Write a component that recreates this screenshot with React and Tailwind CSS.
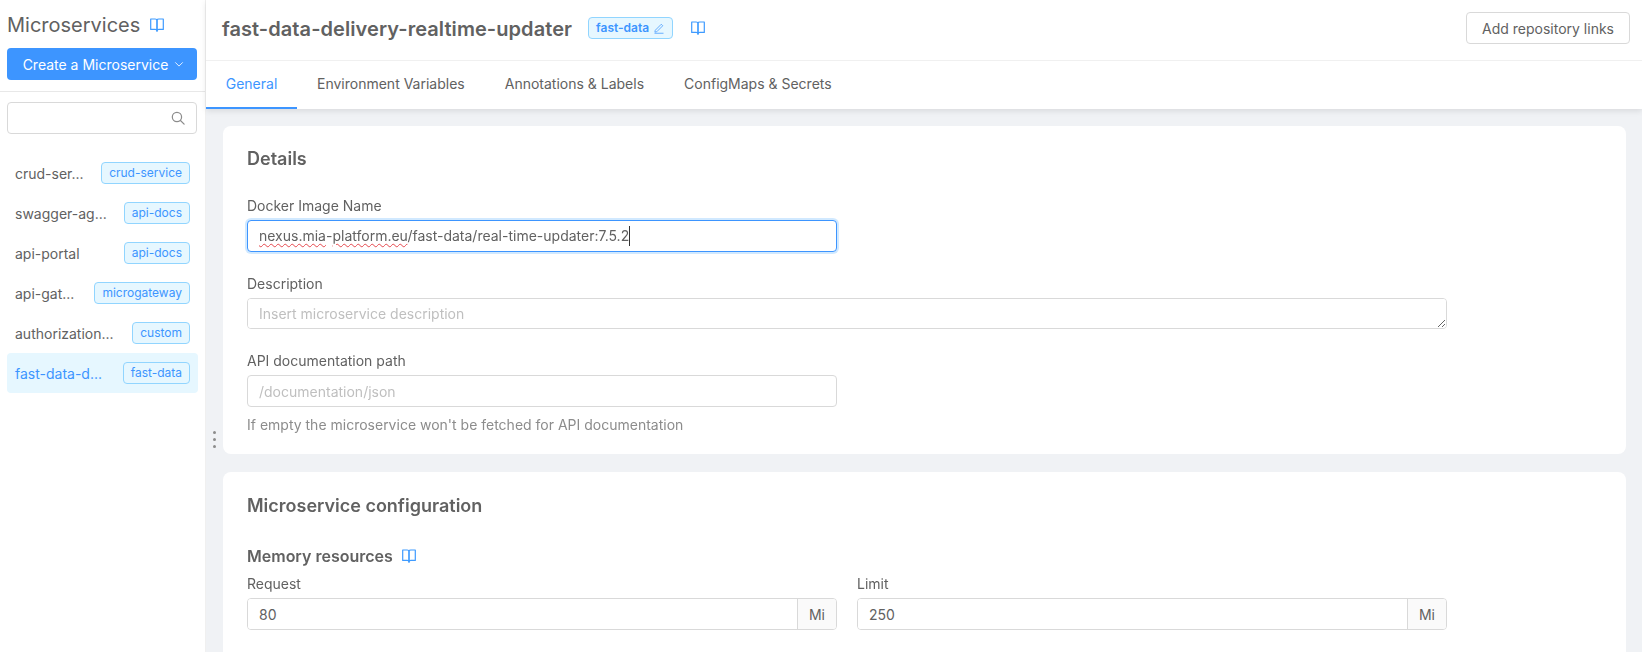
import React from "react";

const Book = ({ className = "" }) => (
  <svg viewBox="0 0 14 14" className={className} fill="none" stroke="#3f9bff" strokeWidth="1.2" strokeLinejoin="round" strokeLinecap="round">
    <path d="M.7 1h4.400c1.100 0 1.900.5 1.900 1.400v9.900c0-.5-.8-.9-1.900-.9H.7z" />
    <path d="M13.300 1H8.900C7.800 1 7 1.500 7 2.400v9.900c0-.5.8-.9 1.900-.9h4.400z" />
    <path d="M7 12.300v1.200" />
  </svg>
);

const items = [
  ["crud-ser...", "crud-service"],
  ["swagger-ag...", "api-docs"],
  ["api-portal", "api-docs"],
  ["api-gat...", "microgateway"],
  ["authorization...", "custom"],
  ["fast-data-d...", "fast-data"],
];

const Tag = ({ children }) => (
  <span className="shrink-0 h-[22px] flex items-center px-[7px] rounded-[4px] border border-[#91d5ff] bg-[#e6f7ff] text-[12px] text-[#3d95ff]">{children}</span>
);

const Unit = ({ label, value }) => (
  <div className="flex-1">
    <div className="h-[22px] mb-[4px] flex items-center text-[14px]">{label}</div>
    <div className="flex h-[32px] border border-[#d9d9d9] rounded-[4px] overflow-hidden">
      <div className="flex-1 px-[11px] flex items-center text-[14px] bg-white">{value}</div>
      <div className="w-[39px] flex items-center justify-center border-l border-[#d9d9d9] bg-[#fafafa] text-[14px]">Mi</div>
    </div>
  </div>
);

const Misspelled = ({ children }) => (
  <span className="underline decoration-wavy decoration-[#e5484d] decoration-1 underline-offset-2">{children}</span>
);

export default function App() {
  return (
    <div className="relative flex h-screen w-full overflow-hidden bg-[#f0f2f5] text-[#616161] font-['Inter',sans-serif]">
      <aside className="w-[206px] shrink-0 bg-white border-r border-[#f0f0f0] flex flex-col">
        <div className="h-[48px] px-[7px] flex items-center gap-[10px] pt-[1px]">
          <span className="text-[20px]">Microservices</span>
          <Book className="w-[14px] h-[14px]" />
        </div>
        <div className="pl-[7px] pr-[8px]">
          <button className="w-full h-[32px] rounded-[4px] bg-[#3d95ff] text-white text-[14px] flex items-center justify-center gap-[6px] pl-[3px]">
            Create a Microservice
            <svg viewBox="0 0 12 12" className="w-[10px] h-[10px]" fill="none" stroke="white" strokeWidth="1"><path d="M1.500 4l4.500 4.500L10.500 4" /></svg>
          </button>
        </div>
        <div className="mt-[11px] border-t border-[#e8e8e8]" />
        <div className="pl-[7px] pr-[8px] mt-[10px]">
          <div className="h-[32px] border border-[#d9d9d9] rounded-[4px] bg-white flex items-center justify-end pr-[11px]">
            <svg viewBox="0 0 16 16" className="w-[14px] h-[14px]" fill="none" stroke="#8c8c8c" strokeWidth="1.400" strokeLinecap="round"><circle cx="6.800" cy="6.800" r="5.300" /><path d="M10.800 10.800l4.200 4.200" /></svg>
          </div>
        </div>
        <ul className="mt-[19px] px-[7px]">
          {items.map(([name, tag], i) => (
            <li key={tag + i} className={`h-[40px] flex items-center justify-between pl-[8px] pr-[8px] rounded-[4px] text-[14px] ${i === 5 ? "bg-[#e6f7ff] text-[#3d95ff]" : ""}`}>
              <span className="whitespace-nowrap">{name}</span>
              <Tag>{tag}</Tag>
            </li>
          ))}
        </ul>
      </aside>

      <main className="flex-1 min-w-0 flex flex-col">
        <div className="bg-white shadow-[0_2px_6px_rgba(0,0,0,0.1)] z-10 relative">
          <div className="h-[61px] flex items-center pl-[16px] pr-[12px] pb-[4px] border-b border-[#f0f0f0]">
            <h1 className="mt-[2px] text-[20px] font-semibold tracking-[0.07px]">fast-data-delivery-realtime-updater</h1>
            <span className="ml-[16px] h-[22px] flex items-center gap-[4px] px-[7px] rounded-[4px] border border-[#91d5ff] bg-[#e6f7ff] text-[12px] font-semibold text-[#3d95ff]">
              fast-data
              <svg viewBox="0 0 16 16" className="w-[12px] h-[12px]" fill="none" stroke="#3d95ff" strokeWidth="1"><path d="M3 11l8-8 2 2-8 8-2.500.5zM2 15h12" /></svg>
            </span>
            <Book className="ml-[18px] w-[14px] h-[14px]" />
            <button className="ml-auto h-[32px] px-[15px] rounded-[4px] border border-[#d9d9d9] bg-white text-[14px]">Add repository links</button>
          </div>
          <nav className="h-[48px] flex text-[14px]">
            <div className="w-[91px] pb-[1px] flex items-center justify-center text-[#3d95ff] border-b-2 border-[#3d95ff]">General</div>
            <div className="ml-[20px] pb-[3px] flex items-center">Environment Variables</div>
            <div className="ml-[40px] pb-[3px] flex items-center">Annotations &amp; Labels</div>
            <div className="ml-[40px] pb-[3px] flex items-center">ConfigMaps &amp; Secrets</div>
          </nav>
        </div>

        <div className="flex-1 min-h-0 overflow-hidden pl-[17px] pr-[16px] pt-[17px] flex flex-col gap-[18px]">
          <section className="h-[328px] shrink-0 bg-white rounded-[8px] pl-[24px] pr-[179px] pt-[20px]">
            <h2 className="text-[18px] leading-[26px] font-semibold">Details</h2>
            <div className="mt-[22px] h-[22px] flex items-center text-[14px]">Docker Image Name</div>
            <div className="mt-[4px] w-[590px] h-[32px] flex items-center whitespace-nowrap bg-white border border-[#3d95ff] shadow-[0_0_0_2px_rgba(24,144,255,0.2)] rounded-[4px] px-[11px] text-[14px]">
              <span className="border-r border-[#333333] leading-[20px]">
                <Misspelled>nexus.mia</Misspelled>-<Misspelled>platform.eu</Misspelled>/fast-data/real-time-updater:7.5.2
              </span>
            </div>
            <div className="mt-[20px] h-[22px] flex items-center text-[14px]">Description</div>
            <textarea readOnly placeholder="Insert microservice description" className="mt-[4px] block w-full h-[31px] min-h-[31px] bg-white border border-[#d9d9d9] rounded-[4px] px-[11px] py-[5px] text-[14px] leading-[20px] outline-none placeholder:text-[#bfbfbf]" />
            <div className="mt-[20px] h-[22px] flex items-center text-[14px]">API documentation path</div>
            <input readOnly placeholder="/documentation/json" className="mt-[4px] block w-[590px] h-[32px] bg-white border border-[#d9d9d9] rounded-[4px] px-[11px] text-[14px] outline-none placeholder:text-[#bfbfbf]" />
            <div className="mt-[6px] h-[22px] flex items-center text-[14px] text-[#8c8c8c]">If empty the microservice won't be fetched for API documentation</div>
          </section>

          <section className="flex-1 bg-white rounded-t-[8px] pl-[24px] pr-[179px] pt-[21px]">
            <h2 className="text-[18px] leading-[26px] font-semibold">Microservice configuration</h2>
            <div className="mt-[25px] h-[24px] flex items-center gap-[9px] text-[16px] font-semibold">
              Memory resources <Book className="w-[14px] h-[14px]" />
            </div>
            <div className="flex gap-[20px] mt-[4px]">
              <Unit label="Request" value="80" />
              <Unit label="Limit" value="250" />
            </div>
          </section>
        </div>
      </main>

      <div className="absolute left-[213px] top-[431px] flex flex-col gap-[4px]">
        <span className="w-[3px] h-[3px] rounded-full bg-[#8c8c8c]" />
        <span className="w-[3px] h-[3px] rounded-full bg-[#8c8c8c]" />
        <span className="w-[3px] h-[3px] rounded-full bg-[#8c8c8c]" />
      </div>
    </div>
  );
}
